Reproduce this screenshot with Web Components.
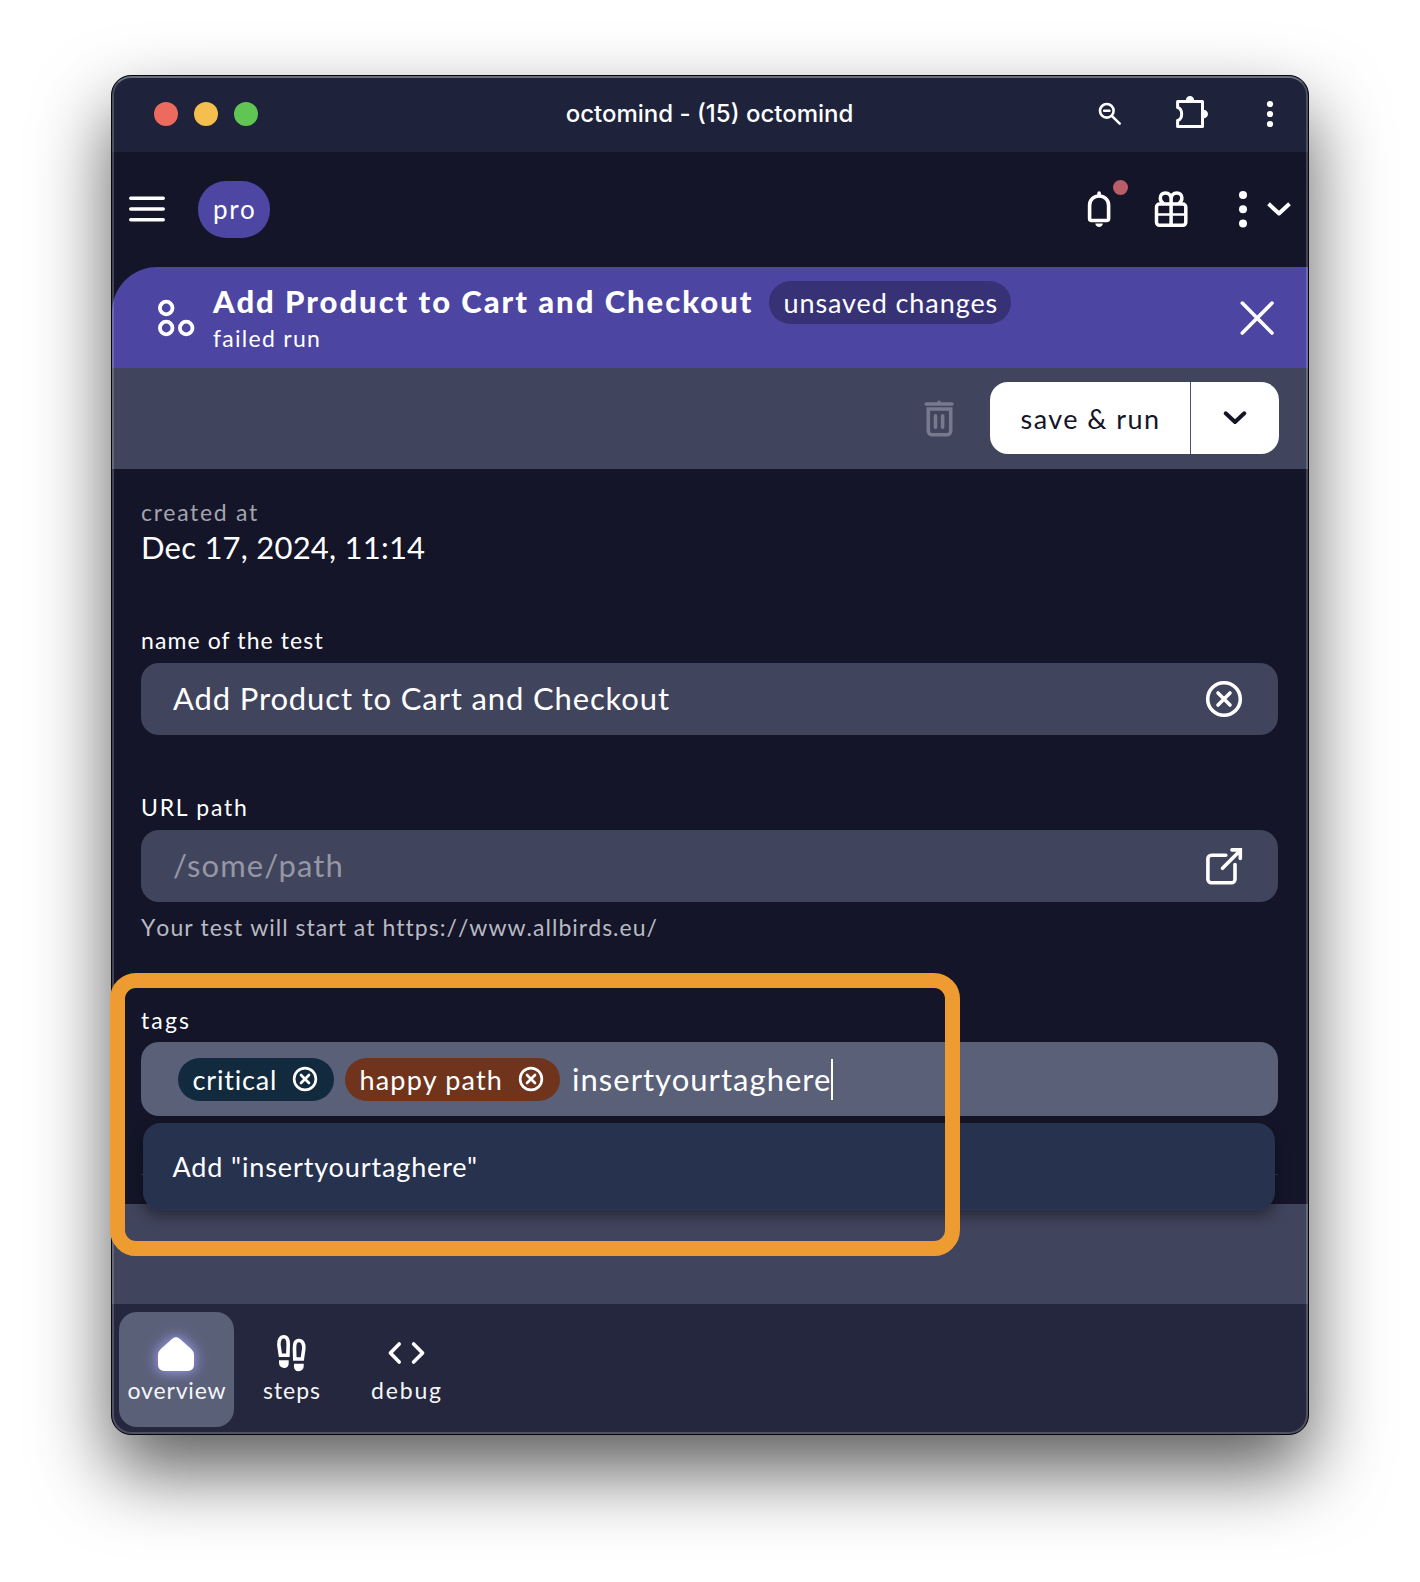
<!DOCTYPE html>
<html lang="en">
<head>
<meta charset="utf-8">
<title>octomind</title>
<style>
  html, body { margin: 0; background: #fff; }
  body { font-family: Lato, "Liberation Sans", sans-serif; color: #fff; height: 1582px; overflow: hidden; }
</style>
</head>
<body>
<desk-stage>
  <app-window>
    <title-bar>octomind - (15) octomind</title-bar>
    <app-header plan="pro"></app-header>
    <test-banner>
      <ui-text size="31" line="43" track="1.97" weight="900" lift="1">Add Product to Cart and Checkout</ui-text>
      <ui-text slot="badge" size="27" line="43" track="0.91" lift="0">unsaved changes</ui-text>
      <ui-text slot="status" size="23" line="28" track="1.28">failed run</ui-text>
    </test-banner>
    <action-bar>save &amp; run</action-bar>
    <test-form></test-form>
    <spacer-bar></spacer-bar>
    <tab-bar>
      <tab-item icon="home" track="0.83">overview</tab-item>
      <tab-item icon="steps" track="0.95">steps</tab-item>
      <tab-item icon="code" track="1.82">debug</tab-item>
    </tab-bar>
  </app-window>
  <highlight-box></highlight-box>
</desk-stage>

<script>
const define = (name, html) => customElements.define(name, class extends HTMLElement {
  connectedCallback() {
    if (this.shadowRoot) return;
    this.attachShadow({ mode: 'open' }).innerHTML = typeof html === 'function' ? html(this) : html;
  }
});

document.querySelector('tab-item').setAttribute('active', '');

const ICONS = {
  menu: '<path d="M1.8 7.2H34.2M1.8 18H34.2M1.8 28.8H34.2"/>',
  bell: '<path d="M8.6 27.5V14.3C8.6 8.7 13 5 18.1 5s9.5 3.700 9.500 9.300V27.500a2 2 0 0 1-2 2H10.600a2 2 0 0 1-2-2Z"/><path d="M18.1 2.100V4" /><path fill="currentColor" stroke="none" d="M14.300 32.600h7.600c-.3 2.200-1.800 3.500-3.800 3.500s-3.500-1.300-3.800-3.500Z"/>',
  gift: '<g stroke-width="3.5"><rect x="3.500" y="13" width="29.300" height="21.300" rx="3"/><path d="M18.100 12V34"/><path stroke-width="2.600" d="M4 23.500H32.500"/><path d="M10 12C8.300 11 7.300 9.300 7.300 7.100 7.300 4 9.500 1.900 12.300 1.900 16 1.900 18.100 4.500 18.100 8V12M26.200 12C27.900 11 28.900 9.300 28.900 7.100 28.900 4 26.700 1.900 23.900 1.900 20.200 1.900 18.100 4.500 18.100 8"/></g>',
  dots: '<g fill="currentColor" stroke="none"><circle cx="18" cy="4" r="4"/><circle cx="18" cy="18.200" r="4"/><circle cx="18" cy="32.500" r="4"/></g>',
  chevron: '<path stroke-linecap="butt" stroke-width="4" d="M7.500 12.800 18 22.500 28.500 12.800"/>',
  chevronRound: '<path stroke-width="4" d="M8.700 13.300 18 22 27.300 13.300"/>',
  octo: '<circle cx="8.200" cy="8" r="6.300"/><circle cx="8.200" cy="28" r="6.300"/><circle cx="28.200" cy="28" r="6.300"/>',
  close: '<path d="M3.300 3.100 33 33M33 3.100 3.300 33"/>',
  trash: '<path stroke-width="3.500" d="M5.200 3.900H31M18 2.300V3"/><path stroke-width="3.600" stroke-linejoin="miter" d="M7.300 9H29.700V31a3.800 3.800 0 0 1-3.800 3.800H11.100A3.800 3.800 0 0 1 7.300 31Z"/><path d="M14.500 15.800V27.300M21.600 15.800V27.300"/>',
  circleX: '<circle cx="18" cy="18" r="16.300"/><path d="M12 12 24 24M24 12 12 24"/>',
  external: '<path d="M19.800 7.300H5.400A3.500 3.500 0 0 0 1.900 10.800V31.200A3.500 3.500 0 0 0 5.400 34.700H25.500A3.500 3.500 0 0 0 29 31.200V16.500M16.500 20.300 33.500 3.300"/><path stroke-linejoin="miter" d="M26 1.900H34.300V10.500"/>',
  home: '<path fill="currentColor" stroke="none" d="M14.300 2.700Q18 -.2 21.700 2.700L33 12.800Q36 15.500 36 19V28.500Q36 35 29.500 35H6.500Q0 35 0 28.500V19Q0 15.500 3 12.800Z"/>',
  steps: '<path stroke-linejoin="miter" d="M7.400 19.300 5.900 9C5.700 3.500 7.500.8 10.800.8S15.300 3.500 15.200 8.500L14.900 19.300Z"/><path stroke-linejoin="miter" d="M29.300 23 30.800 12.700C31 7.200 29.200 4.500 25.900 4.500S21.400 7.200 21.500 12.200L21.800 23Z"/><path fill="currentColor" stroke="none" d="M6 24.300h9.700v3.400a4.200 4.200 0 0 1-4.200 4.200h-.5a5 5 0 0 1-5-5ZM30.700 27.700H21v3.400a4.200 4.200 0 0 0 4.200 4.200h.5a5 5 0 0 0 5-5Z"/>',
  code: '<path d="M11.200 8 2.400 17 11.200 26M25.600 8 34.600 17 25.600 26"/>',
  zoomOut: '<g stroke-width="2.600"><circle cx="8.800" cy="8.800" r="6.800"/><path d="M13.800 13.800 21.700 21.700M6.200 8.800H11.400"/></g>',
  puzzle: '<path stroke-width="3" d="M2.600 12.500V6.500H27.500V31.500H2.600V25.500C8 24 8 14 2.600 12.500Z"/><path fill="currentColor" stroke="none" d="M10.800 5.500a4.200 4.500 0 0 1 8.400 0ZM28.500 14.700a4.500 4.300 0 0 1 0 8.600Z"/>',
  kebab: '<g fill="currentColor" stroke="none"><circle cx="6" cy="4" r="3.100"/><circle cx="6" cy="14" r="3.100"/><circle cx="6" cy="24" r="3.100"/></g>'
};

/* ui-icon: name, w/h (drawn box), vb (view box), stroke */
define('ui-icon', el => {
  const w = el.getAttribute('w') || 36, h = el.getAttribute('h') || w;
  return `<style>:host{display:block;flex:none;width:${w}px;height:${h}px}svg{display:block;overflow:visible}</style>
  <svg width="${w}" height="${h}" viewBox="0 0 ${el.getAttribute('vb') || '36 36'}" fill="none" stroke="currentColor"
   stroke-width="${el.getAttribute('stroke') || 3.6}" stroke-linecap="round" stroke-linejoin="round">${ICONS[el.getAttribute('name')]}</svg>`;
});

/* ui-text: one line of text with its size, line height, tracking and baseline lift */
define('ui-text', el => {
  const a = (n, d) => el.getAttribute(n) || d;
  return `<style>:host{display:block;white-space:nowrap;font-size:${a('size', 23)}px;line-height:${a('line', 28)}px;
   letter-spacing:${a('track', 0)}px;font-weight:${a('weight', 400)}}
   span{display:block;margin-top:-${a('lift', 0)}px;padding-bottom:${a('lift', 0)}px}</style><span><slot></slot></span>`;
});

define('desk-stage', `<style>:host{display:block;position:relative;height:1507px;padding-top:75px}</style><slot></slot>`);

define('app-window', `<style>
 :host{display:flex;flex-direction:column;position:relative;box-sizing:border-box;width:1198px;height:1360px;margin:0 auto;
  border:1px solid #05060c;border-radius:20px;overflow:hidden;background:#141528;box-shadow:0 36px 76px rgba(0,0,0,.64)}
 :host::after{content:"";position:absolute;inset:0;border:2px solid rgba(255,255,255,.2);border-top-color:rgba(255,255,255,.34);
  border-radius:19px;z-index:5}
</style><slot></slot>`);

define('title-bar', `<style>
 :host{display:grid;grid-template-columns:1fr auto 1fr;align-items:center;height:76px;background:#1e233b;flex:none}
 .lights{display:flex;gap:16px;padding-left:42px}
 i{width:24px;height:24px;border-radius:50%;background:#ec6b5e}
 i:nth-child(2){background:#f4bf4f}i:nth-child(3){background:#61c554}
 .title{font:500 24px/30px Inter,sans-serif;padding:0 1px 1px 0}
 .tools{display:flex;justify-content:flex-end;align-items:center;padding-right:32px}
 .a{margin-right:53px}.b{margin-right:55px;margin-bottom:4px}
</style>
<div class="lights"><i></i><i></i><i></i></div><div class="title"><slot></slot></div>
<div class="tools"><ui-icon class="a" name="zoomOut" w="24" vb="24 24"></ui-icon>
<ui-icon class="b" name="puzzle" w="34" vb="34 34"></ui-icon><ui-icon name="kebab" w="12" h="28" vb="12 28"></ui-icon></div>`);

define('app-header', el => `<style>
 :host{display:flex;align-items:center;height:115px;flex:none;padding:0 11px 0 17px}
 .menu{margin-bottom:1px}
 .plan{display:flex;align-items:center;width:72px;height:57px;border-radius:28px;background:#4d46a3;margin-left:33px;padding-left:15px;box-sizing:border-box}
 .right{display:flex;gap:36px;margin-left:auto;margin-bottom:1px}
 .pair{display:flex}
 .bell{position:relative}
 .bell b{position:absolute;left:32px;top:-11px;width:15px;height:15px;border-radius:50%;background:#b95d69}
</style>
<ui-icon class="menu" name="menu"></ui-icon>
<div class="plan"><ui-text size="26" line="35" track="1.7">${el.getAttribute('plan')}</ui-text></div>
<div class="right"><div class="bell"><ui-icon name="bell"></ui-icon><b></b></div><ui-icon name="gift"></ui-icon>
<div class="pair"><ui-icon name="dots"></ui-icon><ui-icon name="chevron"></ui-icon></div></div>`);

define('test-banner', `<style>
 :host{display:flex;align-items:center;height:101px;flex:none;background:#4c45a2;border-top-left-radius:45px;padding:0 33px 0 46px}
 .txt{margin-left:19px;align-self:flex-start;padding-top:14px;flex:1}
 .row{display:flex}
 .main{width:556px}
 .badge{width:242px;height:43px;box-sizing:border-box;padding-left:14.500px;border-radius:22px;background:#373275}
</style>
<ui-icon name="octo" stroke="3.8"></ui-icon>
<div class="txt"><div class="row"><div class="main"><slot></slot></div><div class="badge"><slot name="badge"></slot></div></div><slot name="status"></slot></div>
<ui-icon name="close"></ui-icon>`);

define('action-bar', `<style>
 :host{display:flex;align-items:center;justify-content:flex-end;height:101px;flex:none;background:#40445c;padding-right:29px}
 .trash{color:#777a8e;margin-right:33px;margin-bottom:1px}
 .split{display:flex;width:289px;height:72px;border-radius:18px;background:#fff;color:#141628;margin-bottom:1px}
 .main{display:flex;align-items:center;width:201px;box-sizing:border-box;padding:1px 0 0 30.500px;border-right:1px solid #4a4f78}
 .more{flex:1;display:flex;align-items:center;justify-content:center}
</style>
<ui-icon class="trash" name="trash"></ui-icon>
<div class="split"><div class="main"><ui-text size="27" line="36" track="1.44"><slot></slot></ui-text></div>
<div class="more"><ui-icon name="chevronRound"></ui-icon></div></div>`);

define('text-field', el => {
  const a = n => el.getAttribute(n);
  return `<style>
 :host{display:block}
 .box{display:flex;align-items:center;justify-content:space-between;height:72px;border-radius:18px;background:#40445c;margin-top:9px;padding:0 36px 0 32px}
 .ph{color:#9597a4}.help{margin-top:11px;color:#b9bac3;font-kerning:none}
</style>
<ui-text track="${a('label-track')}">${a('label')}</ui-text>
<div class="box"><ui-text class="${a('value') ? '' : 'ph'}" size="31" line="40" track="${a('track')}" lift="1">${a('value') || a('placeholder')}</ui-text>
<ui-icon name="${a('icon')}"></ui-icon></div>
${a('help') ? `<ui-text class="help" track="1.02">${a('help')}</ui-text>` : ''}`;
});

define('tag-chip', el => `<style>
 :host{display:flex;align-items:center;justify-content:space-between;box-sizing:border-box;height:43px;border-radius:22px;
  padding:0 17px 0 14.500px;width:${el.getAttribute('w')}px;background:${el.getAttribute('tone')}}
</style><ui-text size="27" line="43" track="${el.getAttribute('track')}"><slot></slot></ui-text><ui-icon name="circleX" w="24" stroke="4"></ui-icon>`);

define('tag-field', `<style>
 :host{display:block;position:relative}
 .label{padding-top:1px}
 .box{display:flex;align-items:center;height:74px;box-sizing:border-box;border-radius:18px;background:#5a6078;margin-top:8px;padding-left:37px}
 tag-chip{margin-right:11px}
 .typed{margin-left:1px;width:259px}
 .caret{width:2px;height:41px;background:#fff}
 .menu{position:absolute;z-index:3;left:2px;top:118px;width:1132px;height:86.500px;box-sizing:border-box;border-radius:18px;background:#27324f;
  padding:2px 0 0 29.500px;display:flex;align-items:center;border-bottom:1px solid #2c3558;box-shadow:0 6px 14px rgba(0,0,0,.38)}
</style>
<ui-text class="label" track="2.1">tags</ui-text>
<div class="box"><tag-chip w="156" track="0.84" tone="#112a3e">critical</tag-chip><tag-chip w="215" track="1.19" tone="#70331c">happy path</tag-chip>
<ui-text class="typed" size="31" line="40" track="1.03">insertyourtaghere</ui-text><span class="caret"></span></div>
<div class="menu"><ui-text size="27" line="36" track="0.87">Add "insertyourtaghere"</ui-text></div>`);

define('test-form', `<style>
 :host{display:block;box-sizing:border-box;height:735px;flex:none;padding:29px 30px 0 29px}
 .muted{color:#a3a4ae}
 .date{margin:3px 0 61px}
 .url{margin:58px 0 64px}
 hr{border:0;height:1px;background:#30345a;margin:58px 0 0}
</style>
<ui-text class="muted" track="1.7">created at</ui-text>
<ui-text class="date" size="31" line="36" track="0.23">Dec 17, 2024, 11:14</ui-text>
<text-field label="name of the test" label-track="1.1" value="Add Product to Cart and Checkout" track="0.86" icon="circleX"></text-field>
<text-field class="url" label="URL path" label-track="1.75" placeholder="/some/path" track="1.1" icon="external" help="Your test will start at https://www.allbirds.eu/"></text-field>
<tag-field></tag-field>
<hr>`);

define('spacer-bar', `<style>:host{display:block;height:100px;flex:none;background:#40445c}</style>`);

define('tab-bar', `<style>:host{display:flex;align-items:flex-start;flex:1;background:#25273e;padding:8px 7px 0}</style><slot></slot>`);

define('tab-item', el => `<style>
 :host{display:flex;flex-direction:column;align-items:center;box-sizing:border-box;width:115px;height:115px;border-radius:18px;padding-top:24px;gap:4px;color:#f6f6f8}
 :host([active]){background:#5a6078}
 :host([active]) ui-icon{filter:drop-shadow(0 0 6px rgba(169,164,255,.8)) drop-shadow(0 0 9px rgba(150,145,230,.45))}
 ui-icon{color:#fff;margin-right:1px}
 ui-text{padding-left:1px}
</style><ui-icon name="${el.getAttribute('icon')}"></ui-icon><ui-text track="${el.getAttribute('track')}"><slot></slot></ui-text>`);

define('highlight-box', `<style>:host{display:block;position:absolute;left:110px;top:973px;width:850px;height:283px;box-sizing:border-box;
 border:15px solid #ee9b31;border-radius:26px;z-index:10}</style>`);
</script>
</body>
</html>
